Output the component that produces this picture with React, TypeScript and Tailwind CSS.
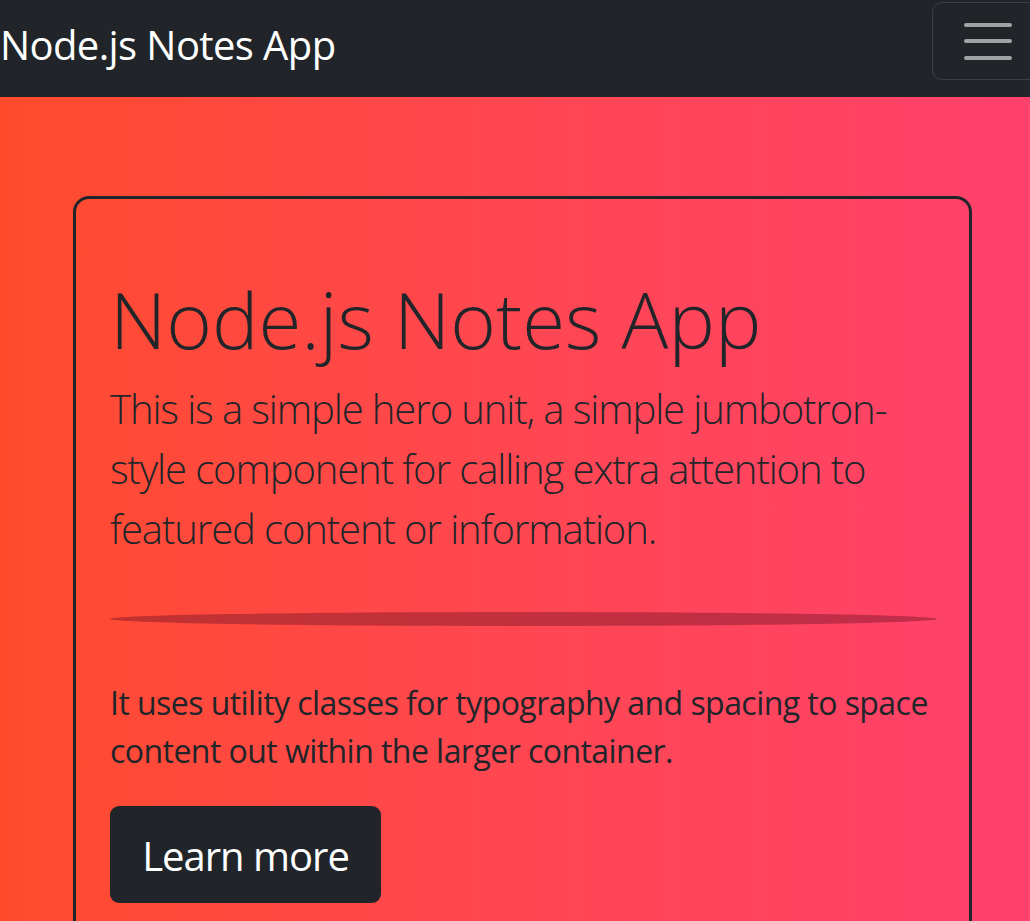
export default function App() {
  const font = { fontFamily: '"Open Sans", "Noto Sans", sans-serif' };
  return (
    <div className="w-[1030px] h-[921px] overflow-hidden" style={font}>
      <nav className="h-[97px] bg-[#212529] flex items-center justify-between overflow-hidden">
        <span className="text-white text-[40px] leading-none font-normal pb-[8px] tracking-[-0.6px]">Node.js Notes App</span>
        <button className="mr-[-16px] self-start mt-[2px] h-[78px] w-[114px] border-[1.5px] border-[rgba(255,255,255,0.12)] rounded-[10px] flex flex-col items-center justify-center gap-[12.5px] pr-[2px]">
          <span className="block w-[48px] h-[4px] rounded-full bg-[#a0a2a4]" />
          <span className="block w-[48px] h-[4px] rounded-full bg-[#a0a2a4]" />
          <span className="block w-[48px] h-[4px] rounded-full bg-[#a0a2a4]" />
        </button>
      </nav>
      <main className="h-[824px] bg-gradient-to-r from-[#ff4b2b] to-[#ff416c] pt-[99px]">
        <div className="ml-[73px] w-[899px] h-[900px] border-[3px] border-[#212529] rounded-[16px] px-[34px] pt-[74px]">
          <h1 className="text-[#212529] text-[78px] font-light leading-[1.2] whitespace-nowrap">Node.js Notes App</h1>
          <p className="text-[#212529] text-[40px] font-light leading-[60px] mt-[12px] tracking-[-1.1px] whitespace-nowrap">
            This is a simple hero unit, a simple jumbotron-<br />style component for calling extra attention to<br />featured content or information.
          </p>
          <div className="mt-[53px] h-[14px] w-[827px] rounded-[100%] bg-[rgba(120,20,40,0.45)] blur-[0.6px]" />
          <p className="text-[#212529] text-[32px] leading-[48px] mt-[53px] tracking-[-0.55px] whitespace-nowrap">
            It uses utility classes for typography and spacing to space<br />content out within the larger container.
          </p>
          <button className="mt-[31px] h-[97px] w-[271px] rounded-[9px] bg-[#212529] text-white text-[40px] leading-none tracking-[-1px] pt-[4px]">Learn more</button>
        </div>
      </main>
    </div>
  );
}
